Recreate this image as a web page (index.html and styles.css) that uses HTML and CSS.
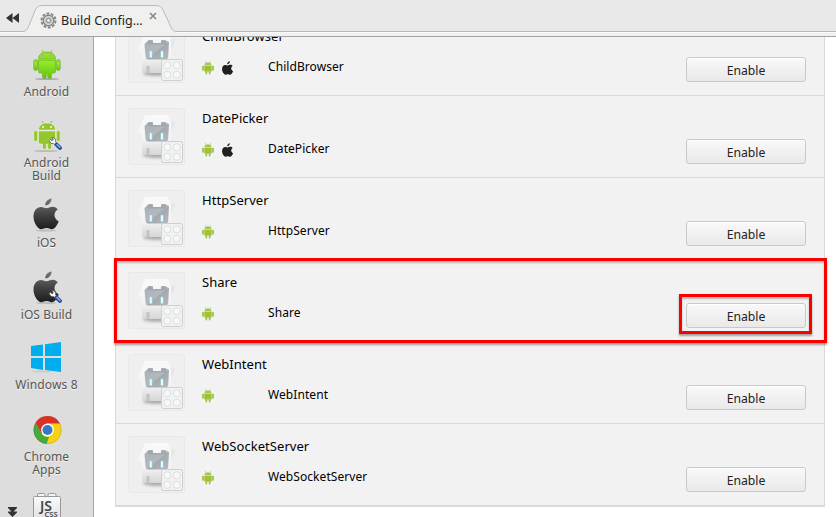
FILE: index.html
```html
<!DOCTYPE html>
<html lang="en">
<head>
<meta charset="utf-8">
<title>Build Config</title>
<link rel="stylesheet" href="styles.css">
</head>
<body>
<svg class="defs" width="0" height="0" aria-hidden="true">
  <defs>
    <linearGradient id="dark" x1="0" y1="0" x2="0" y2="1"><stop offset="0" stop-color="#777"/><stop offset=".5" stop-color="#444"/><stop offset="1" stop-color="#1c1c1c"/></linearGradient>
    <linearGradient id="green" x1="0" y1="0" x2="0" y2="1"><stop offset="0" stop-color="#93dc2c"/><stop offset=".4" stop-color="#8fea22"/><stop offset="1" stop-color="#62c40c"/></linearGradient>
    <linearGradient id="face" x1="0" y1="0" x2="1" y2="1"><stop offset="0" stop-color="#a9b0b5"/><stop offset=".5" stop-color="#b3b9bd"/><stop offset=".56" stop-color="#a3a9af"/><stop offset="1" stop-color="#b4b8bc"/></linearGradient>
    <linearGradient id="side" x1="0" y1="0" x2="0" y2="1"><stop offset="0" stop-color="#f9f9f9"/><stop offset=".6" stop-color="#f4f4f4"/><stop offset="1" stop-color="#d6d6d6"/></linearGradient>
    <linearGradient id="brick" x1="0" y1="0" x2="0" y2="1"><stop offset="0" stop-color="#fafafa"/><stop offset="1" stop-color="#dadada"/></linearGradient>
    <filter id="soft" x="-30%" y="-100%" width="160%" height="300%"><feGaussianBlur stdDeviation="1.8"/></filter>
    <symbol id="droid" viewBox="0 0 28 32">
      <path d="M9 2 10.800 5M19 2 17.200 5" stroke-width="1" stroke="#94bd3a"/>
      <path d="M5.500 11C5.500 6.500 9.200 4 14 4s8.500 2.500 8.500 7zM5.500 12h17v11.500q0 1.500-1.500 1.500h-2.500v3.500a1.900 1.900 0 0 1-3.800 0V25h-1.400v3.500a1.900 1.900 0 0 1-3.800 0V25H7q-1.500 0-1.500-1.500z"/>
      <rect x=".8" y="11.500" width="3.800" height="11" rx="1.900"/><rect x="23.400" y="11.500" width="3.800" height="11" rx="1.900"/>
      <circle cx="10" cy="8" r=".8" fill="#fff"/><circle cx="18" cy="8" r=".8" fill="#fff"/>
    </symbol>
    <symbol id="apple" viewBox="0 0 26 32">
      <path d="M18.500.5c.3 3.500-2.800 7-6.200 7C11.900 4 15.200.8 18.500.5zM24.800 11.500c-5 3-4 9.500.9 11.700-1.300 3.600-3.800 8-6.900 8-2 0-2.900-1.200-5.200-1.200s-3.300 1.200-5.200 1.200C4.500 31.200.5 24.500.5 18.500c0-6 3.500-9.600 7.500-9.600 2.300 0 4 1.300 5.600 1.300 1.400 0 3.600-1.500 6.200-1.500 2.200 0 3.900 1.100 5 2.800z"/>
    </symbol>
    <symbol id="wrench" viewBox="0 0 13 13">
      <path d="M1 2.200 3.300 3.800 4.300 2.800 3 .7C5.800.2 7.300 2.500 6.500 4.800L8 6.300 6.300 8 4.600 6.600C2.500 7.200.5 5.400.6 3.600" fill="#fafafa" stroke="#606060" stroke-width=".9"/>
      <path d="M7.600 7.600 10.900 10.900" stroke="#254f9e" stroke-width="4" stroke-linecap="round"/>
      <path d="M8 7.500 10.900 10.300" stroke="#8eb9ef" stroke-width="1.300" stroke-linecap="round"/>
    </symbol>
    <symbol id="plugin" viewBox="0 0 57 57">
      <rect x=".5" y=".5" width="56" height="56" rx="1" fill="#efefef" stroke="#e9e9e9"/>
      <ellipse cx="29" cy="47" rx="14" ry="3" fill="#aaa" filter="url(#soft)"/>
      <path d="M40 13.500 47.500 13.500 45 20.500 42 24z" fill="#e6e6e6"/>
      <path d="M17 7H40L43 14V43q-1 4-5 4H18q-4 0-4-4V26L10 24z" fill="url(#side)"/>
      <path d="M20 14.500q2.500-1 5 0V17h8v-2.500q2.500-1 5 0l3 1.500-.8 15q-.4 2.500-2.700 2.500H20q-2 0-2.400-2.500L16.500 18z" fill="url(#face)"/>
      <path d="M20 14.500q2.500-1 5 0V17h8v-2.500q2.500-1 5 0v4H20z" fill="#929ca3" fill-opacity=".5"/>
      <rect x="21.300" y="24.500" width="3" height="7.500" rx="1.500" fill="#e3fcff" stroke="#92bdc6" stroke-width=".7"/><rect x="32.500" y="24.500" width="3" height="7.500" rx="1.500" fill="#e3fcff" stroke="#92bdc6" stroke-width=".7"/>
      <path d="M18.500 40h3v7h-3z" fill="#c3c3c3"/>
      <rect x="33.500" y="33.500" width="21" height="21" rx="2" fill="#f1f2f2" stroke="#cfcfcf"/>
      <g fill="#f7f7f7" stroke="#d3dada" stroke-width=".8"><circle cx="39.300" cy="39.300" r="3.600"/><circle cx="48.800" cy="39.300" r="3.600"/><circle cx="39.300" cy="48.800" r="3.600"/><circle cx="48.800" cy="48.800" r="3.600"/></g>
    </symbol>
    <symbol id="mini" viewBox="0 0 12 14">
      <path d="M3.200.3 4.200 2M8.800.3 7.800 2" stroke="#a0c13b" stroke-width=".7"/>
      <path d="M2.300 4.600C2.500 2.600 4 1.500 6 1.500s3.500 1.100 3.700 3.100zM2.300 5h7.400v5.600H8.500v2a.8.800 0 0 1-1.700 0v-2H5.200v2a.8.800 0 0 1-1.700 0v-2H2.300z"/>
      <rect x=".1" y="4.700" width="1.800" height="5" rx=".9"/><rect x="10.100" y="4.700" width="1.800" height="5" rx=".9"/>
      <circle cx="4.300" cy="3.300" r=".4" fill="#fff"/><circle cx="7.700" cy="3.300" r=".4" fill="#fff"/>
    </symbol>
  </defs>
</svg>
<div class="app">
  <header class="tabbar">
    <svg class="tabshape" width="836" height="36" viewBox="0 0 836 36">
      <path d="M-1 31.500H22C27 31.500 28 28 30 23L34 13C36 7.500 38 5.500 43 5.500H155C160 5.500 162 7 164 12L170 25C172 30 173 31.500 177 31.500H837V37H-1z" fill="#f0f0ef" stroke="#b8b8b8"/>
      <path d="M0 32.500H23M176 32.500H836" stroke="#fafafa"/>
    </svg>
    <svg class="rewind" width="14" height="10" viewBox="0 0 14 10"><path d="M6.500 0v10L0 5zM13 0v10L6.500 5z" fill="#333"/></svg>
    <svg class="gear" width="17" height="17" viewBox="0 0 17 17">
      <circle cx="8.500" cy="8.500" r="7" fill="none" stroke="#858585" stroke-width="2" stroke-dasharray="2.800 1.598"/>
      <circle cx="8.500" cy="8.500" r="5.200" fill="#ccc" stroke="#858585" stroke-width="1.400"/><circle cx="8.500" cy="8.500" r="4" fill="#bbb" stroke="#ddd"/><circle cx="8.500" cy="8.500" r="2" fill="#f0f0f0" stroke="#888"/>
    </svg>
    <span class="tabtitle">Build Config...</span>
    <svg class="close" width="8" height="8" viewBox="0 0 8 8"><path d="M1 1 7 7M7 1 1 7" stroke="#888" stroke-width="1.600"/></svg>
  </header>
  <div class="body">
    <nav class="sidebar">
      <div class="item"><svg class="pic" width="30" height="34" viewBox="0 0 30 34"><ellipse cx="15" cy="32" rx="12" ry="1" fill="#aaa"/><use href="#droid" x="1" y="1" width="28" height="32" fill="url(#green)" stroke="#76aa3b" stroke-width=".7"/></svg><span>Android</span></div>
      <div class="item"><svg class="pic" width="30" height="34" viewBox="0 0 30 34"><ellipse cx="14" cy="33" rx="12" ry="1" fill="#bbb"/><use href="#droid" x="1" y="1" width="28" height="32" fill="#94c72d" stroke="#f4f9e8" stroke-width=".5"/><use href="#wrench" x="17" y="19" width="13" height="13"/></svg><span class="two">Android<br>Build</span></div>
      <div class="item ios"><svg class="pic" width="30" height="34" viewBox="0 0 30 34"><ellipse cx="14" cy="32.500" rx="10" ry="1" fill="#bbb"/><use href="#apple" x="1" y="0" width="26" height="32" fill="url(#dark)"/></svg><span>iOS</span></div>
      <div class="item ios-build"><svg class="pic" width="30" height="34" viewBox="0 0 30 34"><ellipse cx="14" cy="33" rx="10" ry="1" fill="#bbb"/><use href="#apple" x="1" y="1" width="26" height="32" fill="url(#dark)"/><use href="#wrench" x="17" y="20" width="13" height="13"/></svg><span>iOS Build</span></div>
      <div class="item windows"><svg class="pic win" width="30" height="34" viewBox="0 0 30 34"><ellipse cx="11" cy="31.500" rx="10" ry="1" fill="#ccc"/><path d="M0 6 12 4.500V16H0zM14 4.200 30 2V16H14zM0 18h12v12L0 28zM14 18h16v14L14 30z" fill="#00adef"/></svg><span>Windows 8</span></div>
      <div class="item chrome"><svg class="pic" width="30" height="34" viewBox="0 0 30 34">
        <circle cx="15.500" cy="18" r="14" fill="#f9d313"/><path d="M15.500 18 9.500 21.500 3.400 11A14 14 0 0 1 28 11.500H15.500z" fill="#dc3027"/><path d="M3.400 11 9.500 21.500Q11 25 17 25L14.500 32A14 14 0 0 1 3.400 11z" fill="#43a943"/><circle cx="15.500" cy="18" r="6.400" fill="#fff"/><circle cx="15.500" cy="18" r="5" fill="#3479c5"/><circle cx="15.500" cy="18" r="13.700" fill="none" stroke="#555" stroke-opacity=".35" stroke-width=".6"/></svg><span class="two">Chrome<br>Apps</span></div>
      <div class="item"><svg class="pic js" width="30" height="34" viewBox="0 0 30 34"><path d="M5.500 6V3q0-1.500 1.500-1.500h4.500Q13 1.500 13 3v3M16 6V3q0-1.500 1.500-1.500h5Q24 1.500 24 3v3" fill="#f4f4f4" stroke="#999"/><rect x="1.500" y="4.500" width="27" height="30" rx="1" fill="url(#brick)" stroke="#999"/><text x="8" y="19" class="jstext">JS</text><text x="12.500" y="25" class="csstext">CSS</text></svg></div>
      <svg class="more" width="9" height="11" viewBox="0 0 9 11"><path d="M0 1h9v1L5.500 5.500H9v1L4.500 11 0 6.500v-1h3.500L0 2z" fill="#333"/></svg>
    </nav>
    <main class="content">
      <ul class="list">
        <li class="row"><svg class="thumb"><use href="#plugin"/></svg><div class="info"><h2>ChildBrowser</h2><div class="meta"><span class="platforms"><svg class="d"><use href="#mini"/></svg><svg class="a"><use href="#apple"/></svg></span><span class="desc">ChildBrowser</span></div></div><button>Enable</button></li>
        <li class="row"><svg class="thumb"><use href="#plugin"/></svg><div class="info"><h2>DatePicker</h2><div class="meta"><span class="platforms"><svg class="d"><use href="#mini"/></svg><svg class="a"><use href="#apple"/></svg></span><span class="desc">DatePicker</span></div></div><button>Enable</button></li>
        <li class="row"><svg class="thumb"><use href="#plugin"/></svg><div class="info"><h2>HttpServer</h2><div class="meta"><span class="platforms"><svg class="d"><use href="#mini"/></svg></span><span class="desc">HttpServer</span></div></div><button>Enable</button></li>
        <li class="row marked"><svg class="thumb"><use href="#plugin"/></svg><div class="info"><h2>Share</h2><div class="meta"><span class="platforms"><svg class="d"><use href="#mini"/></svg></span><span class="desc">Share</span></div></div><button>Enable</button><i class="mark mark-row"></i><i class="mark mark-button"></i></li>
        <li class="row"><svg class="thumb"><use href="#plugin"/></svg><div class="info"><h2>WebIntent</h2><div class="meta"><span class="platforms"><svg class="d"><use href="#mini"/></svg></span><span class="desc">WebIntent</span></div></div><button>Enable</button></li>
        <li class="row"><svg class="thumb"><use href="#plugin"/></svg><div class="info"><h2>WebSocketServer</h2><div class="meta"><span class="platforms"><svg class="d"><use href="#mini"/></svg></span><span class="desc">WebSocketServer</span></div></div><button>Enable</button></li>
      </ul>
    </main>
  </div>
</div>
</body>
</html>
```
FILE: styles.css
```css
* { box-sizing: border-box; }
body { margin: 0; overflow: hidden; font-family: "Lucida Grande", "Noto Sans", sans-serif; color: #000; }
svg { display: block; flex: none; }
.defs { position: absolute; }
.app { width: 836px; height: 517px; display: flex; flex-direction: column; background: #fff; }
.tabbar { position: relative; height: 37px; flex: none; display: flex; align-items: flex-start; background: #e9e9e9; border-bottom: 1px solid #a3a3a3; padding-left: 6px; }
.tabshape { position: absolute; left: 0; top: 0; }
.rewind, .gear, .tabtitle, .close { position: relative; }
.rewind { margin-top: 13px; }
.gear { margin: 12px 0 0 20px; }
.tabtitle { width: 84px; margin: 12px 0 0 4px; line-height: 17px; font-size: 12.5px; white-space: nowrap; color: #222; }
.close { margin: 12px 0 0 4px; }
.body { flex: 1; min-height: 0; display: flex; }
.sidebar { position: relative; width: 94px; flex: none; background: #ddd; border-right: 1px solid #a5a5a5; padding-top: 10px; overflow: hidden; }
.item { display: flex; flex-direction: column; align-items: center; padding-bottom: 20px; }
.item:has(.two) { padding-bottom: 16px; }
.item span { margin-top: 4px; font-size: 12px; line-height: 13px; text-align: center; color: #555; text-shadow: 0 1px 0 #f4f4f4; white-space: nowrap; letter-spacing: .05px; }
.ios { padding-bottom: 21px; }
.ios-build { padding-bottom: 19px; }
.windows { padding-bottom: 21px; }
.windows span { letter-spacing: .15px; }
.win { margin-right: 1px; }
.jstext { font-size: 14px; font-weight: 600; fill: #444; }
.csstext { font-size: 7.5px; font-weight: 600; fill: #444; }
.more { position: absolute; left: 8px; bottom: 0; }
.content { flex: 1; min-width: 0; overflow: hidden; padding: 0 11px 0 21px; }
.list { list-style: none; margin: -24px 0 0; padding: 0; border: 1px solid #d9d9d9; border-bottom-width: 2px; background: #f2f2f2; }
.row { position: relative; display: flex; height: 82px; padding: 12px 18px 0 12px; border-bottom: 1px solid #d9d9d9; }
.row:last-child { border-bottom: 0; height: 81px; }
.thumb { width: 57px; height: 57px; }
.info { flex: 1; padding-left: 17px; }
h2 { margin: 1px 0 0; font-size: 13px; font-weight: 400; line-height: 18px; letter-spacing: .05px; }
.meta { display: flex; margin-top: 14px; }
.platforms { display: flex; gap: 7px; width: 66px; margin-top: 2px; }
.d { width: 12px; height: 14px; fill: #a0c13b; }
.a { width: 13px; height: 14px; fill: #231f20; }
.desc { font-size: 12px; line-height: 16px; letter-spacing: .07px; }
button { width: 120px; height: 25px; margin: 31px 0 0; padding: 1px 0 0; border: 1px solid #c9c9c9; border-radius: 3px; background: linear-gradient(#f9f9f9, #e9e9e9); box-shadow: inset 0 1px #fff; font: 12.2px "Lucida Grande", "Noto Sans", sans-serif; color: #222; }
.mark { position: absolute; border: 3px solid #fa0000; box-shadow: 0 2px 2px rgba(0,0,0,.35), inset 0 2px 2px rgba(0,0,0,.25); z-index: 1; pointer-events: none; }
.mark-row { left: -2px; top: -2px; width: 713px; height: 85px; }
.mark-button { left: 563px; top: 34px; width: 133px; height: 40px; }
```
